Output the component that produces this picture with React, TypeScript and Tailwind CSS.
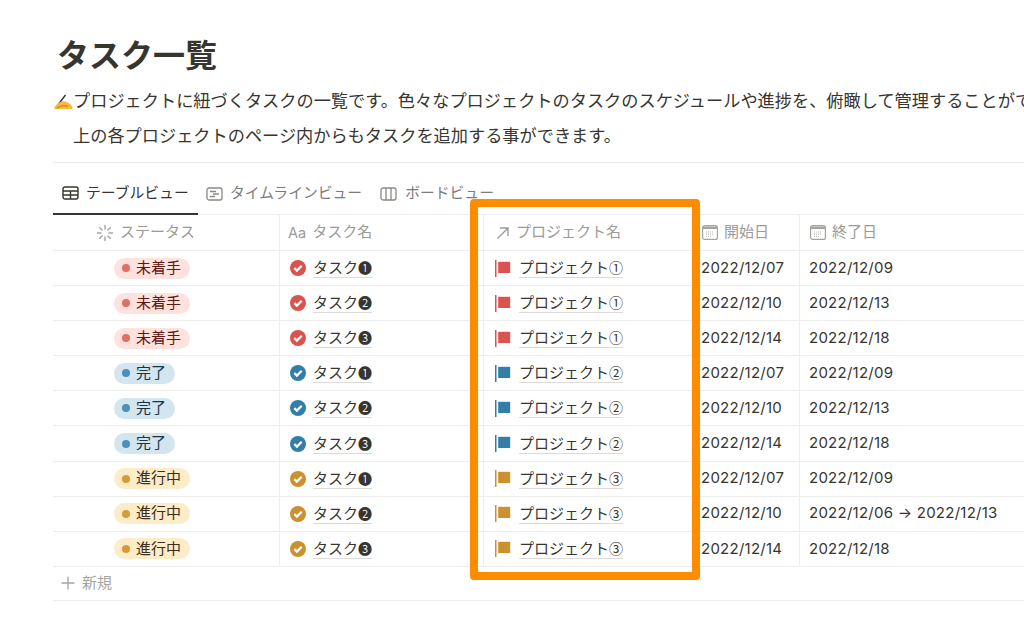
const font = '[font-family:Inter,"Noto_Sans_CJK_JP",sans-serif]';

const rows = [
  { status: "未着手", pill: "bg-[#ffe2dd]", dot: "bg-[#e16f64]", ink: "text-[#5d1715]", color: "#d9534f", task: "❶", project: "①", start: "2022/12/07", end: "2022/12/09" },
  { status: "未着手", pill: "bg-[#ffe2dd]", dot: "bg-[#e16f64]", ink: "text-[#5d1715]", color: "#d9534f", task: "❷", project: "①", start: "2022/12/10", end: "2022/12/13" },
  { status: "未着手", pill: "bg-[#ffe2dd]", dot: "bg-[#e16f64]", ink: "text-[#5d1715]", color: "#d9534f", task: "❸", project: "①", start: "2022/12/14", end: "2022/12/18" },
  { status: "完了", pill: "bg-[#d3e5ef]", dot: "bg-[#4b8fbd]", ink: "text-[#183347]", color: "#337ea9", task: "❶", project: "②", start: "2022/12/07", end: "2022/12/09" },
  { status: "完了", pill: "bg-[#d3e5ef]", dot: "bg-[#4b8fbd]", ink: "text-[#183347]", color: "#337ea9", task: "❷", project: "②", start: "2022/12/10", end: "2022/12/13" },
  { status: "完了", pill: "bg-[#d3e5ef]", dot: "bg-[#4b8fbd]", ink: "text-[#183347]", color: "#337ea9", task: "❸", project: "②", start: "2022/12/14", end: "2022/12/18" },
  { status: "進行中", pill: "bg-[#fdecc8]", dot: "bg-[#d69b36]", ink: "text-[#402c1b]", color: "#cb912f", task: "❶", project: "③", start: "2022/12/07", end: "2022/12/09" },
  { status: "進行中", pill: "bg-[#fdecc8]", dot: "bg-[#d69b36]", ink: "text-[#402c1b]", color: "#cb912f", task: "❷", project: "③", start: "2022/12/10", end: "2022/12/06 → 2022/12/13" },
  { status: "進行中", pill: "bg-[#fdecc8]", dot: "bg-[#d69b36]", ink: "text-[#402c1b]", color: "#cb912f", task: "❸", project: "③", start: "2022/12/14", end: "2022/12/18" },
];

function WritingHand() {
  return (
    <svg width="20" height="20" viewBox="0 0 20 20" className="shrink-0">
      <path d="M2.5 17 L12.5 4" stroke="#333" strokeWidth="1.4" fill="none" />
      <path d="M1 18 C2 14 5 11.5 9 10.5 C11 10 14 11 16 12.5 C18 13.5 19.5 15 19.5 18 Z" fill="#f6b83f" />
      <path d="M4 17 C7 14.5 11 14 15 15.5" stroke="#d9822b" strokeWidth="1.4" fill="none" />
    </svg>
  );
}

function TableIcon() {
  return (
    <svg width="17" height="14" viewBox="0 0 17 14" fill="none" stroke="#37352f" strokeWidth="1.4" className="shrink-0">
      <rect x="1" y="1" width="15" height="12" rx="2" />
      <path d="M1 5h15M1 9h15M8.5 5v8" />
    </svg>
  );
}

function TimelineIcon() {
  return (
    <svg width="17" height="14" viewBox="0 0 17 14" fill="none" stroke="#8a8984" strokeWidth="1.3" className="shrink-0">
      <rect x="1" y="1" width="15" height="12" rx="2" />
      <path d="M4 4.5h6M7 7h6M4 9.5h5" />
    </svg>
  );
}

function BoardIcon() {
  return (
    <svg width="17" height="14" viewBox="0 0 17 14" fill="none" stroke="#8a8984" strokeWidth="1.3" className="shrink-0">
      <rect x="1" y="1" width="15" height="12" rx="2" />
      <path d="M6 1v12M11 1v12" />
    </svg>
  );
}

function SpinnerIcon() {
  return (
    <svg width="18" height="18" viewBox="0 0 18 18" stroke="#a5a4a0" strokeWidth="1.4" strokeLinecap="round" className="shrink-0">
      <path d="M9 1.5v3.5M9 13v3.5M1.5 9H5M13 9h3.5M3.7 3.7l2.4 2.4M11.9 11.9l2.4 2.4M14.3 3.7l-2.4 2.4M6.1 11.9l-2.4 2.4" />
    </svg>
  );
}

function ArrowIcon() {
  return (
    <svg width="14" height="14" viewBox="0 0 14 14" fill="none" stroke="#9b9a97" strokeWidth="1.4" className="shrink-0">
      <path d="M1.5 12.5L12 2M4 2h8v8" />
    </svg>
  );
}

function CalendarIcon() {
  return (
    <svg width="16" height="15" viewBox="0 0 16 15" className="shrink-0">
      <rect x="0.6" y="0.6" width="14.8" height="13.8" rx="2" fill="#fff" stroke="#a5a4a0" strokeWidth="1.2" />
      <path d="M1 1.5h14V4H1z" fill="#a5a4a0" />
      <path d="M4 7h8M4 9.2h8M4 11.4h6" stroke="#b5b4b0" strokeWidth="1" strokeDasharray="1 1" />
    </svg>
  );
}

function CheckIcon({ color }: { color: string }) {
  return (
    <svg width="16" height="16" viewBox="0 0 16 16" className="shrink-0">
      <circle cx="8" cy="8" r="8" fill={color} />
      <path d="M4.3 8.1l2.6 2.5 4.8-4.9" fill="none" stroke="#fff" strokeWidth="2.2" />
    </svg>
  );
}

function FlagIcon({ color }: { color: string }) {
  return (
    <svg width="16" height="17" viewBox="0 0 16 17" className="shrink-0">
      <rect x="0" y="0" width="1.5" height="17" fill={color} />
      <rect x="3.2" y="1.8" width="12" height="11.2" fill={color} />
    </svg>
  );
}

function Circled({ children }: { children: string }) {
  return <span className='[font-family:"Noto_Sans_CJK_JP",sans-serif] text-[14px]'>{children}</span>;
}

function DateCell({ value, className }: { value: string; className: string }) {
  return <div className={`${className} flex items-center text-[15px] tracking-[0.25px] text-[#37352f]`}>{value}</div>;
}

export default function App() {
  return (
    <div className={`${font} relative h-[641px] w-[1024px] overflow-hidden bg-white pl-[53px] text-[#37352f]`}>
      <h1 className="pl-[4px] pt-[34px] text-[32px] font-bold leading-[44px]">タスク一覧</h1>

      <div className="mt-[5px] flex h-[36px] items-center whitespace-nowrap text-[17.2px]">
        <WritingHand />
        <span>プロジェクトに紐づくタスクの一覧です。色々なプロジェクトのタスクのスケジュールや進捗を、俯瞰して管理することができます。</span>
      </div>
      <div className="flex h-[34px] items-center whitespace-nowrap pl-[20px] text-[17.2px]">
        上の各プロジェクトのページ内からもタスクを追加する事ができます。
      </div>

      <div className="mt-[9px] h-px bg-[#ebebea]" />

      <div className="mt-[16px] flex h-[36px] border-b border-[#ededec] text-[14.8px]">
        <div className="flex h-[36px] w-[145px] items-center gap-[7px] border-b-2 border-[#37352f] pb-[6px] pl-[9px]">
          <TableIcon />
          テーブルビュー
        </div>
        <div className="flex items-center gap-[7px] pb-[6px] pl-[8px] text-[#7d7c78]">
          <TimelineIcon />
          タイムラインビュー
        </div>
        <div className="flex items-center gap-[8px] pb-[6px] pl-[18px] text-[#7d7c78]">
          <BoardIcon />
          ボードビュー
        </div>
      </div>

      <div className="flex h-[36px] border-b border-[#ededec] text-[15px] text-[#9b9a97]">
        <div className="flex w-[226px] items-center gap-[6px] pl-[43px]">
          <SpinnerIcon />
          ステータス
        </div>
        <div className="flex w-[204px] items-center gap-[6px] border-l border-[#ededec] pl-[8px]">
          <span className="text-[14.5px]">Aa</span>
          タスク名
        </div>
        <div className="flex w-[209px] items-center gap-[6px] border-l border-[#ededec] pl-[12px]">
          <ArrowIcon />
          プロジェクト名
        </div>
        <div className="flex w-[107px] items-center gap-[6px] border-l border-[#ededec] pl-[9px]">
          <CalendarIcon />
          開始日
        </div>
        <div className="flex flex-1 items-center gap-[6px] border-l border-[#ededec] pl-[10px]">
          <CalendarIcon />
          終了日
        </div>
      </div>

      {rows.map((row, i) => (
        <div key={i} className="flex h-[35.1px] border-b border-[#ededec]">
          <div className="flex w-[226px] items-center pl-[61px]">
            <span className={`flex h-[21px] items-center gap-[6px] rounded-full pl-[8px] pr-[9px] text-[15px] ${row.pill} ${row.ink}`}>
              <span className={`h-[8px] w-[8px] rounded-full ${row.dot}`} />
              {row.status}
            </span>
          </div>
          <div className="flex w-[204px] items-center gap-[7px] border-l border-[#ededec] pl-[10px]">
            <CheckIcon color={row.color} />
            <span className="border-b border-[#dcdbd9] text-[15px] leading-[18px]">
              タスク<Circled>{row.task}</Circled>
            </span>
          </div>
          <div className="flex w-[209px] items-center gap-[8px] border-l border-[#ededec] pl-[11px]">
            <FlagIcon color={row.color} />
            <span className="border-b border-[#dcdbd9] text-[15px] leading-[18px]">
              プロジェクト<Circled>{row.project}</Circled>
            </span>
          </div>
          <DateCell value={row.start} className="w-[107px] border-l border-[#ededec] pl-[8px]" />
          <DateCell value={row.end} className="flex-1 border-l border-[#ededec] pl-[9px]" />
        </div>
      ))}

      <div className="flex h-[34px] items-center gap-[7px] border-b border-[#ededec] pl-[8px] text-[15px] text-[#a5a4a0]">
        <svg width="14" height="14" viewBox="0 0 14 14" stroke="#a5a4a0" strokeWidth="1.3" className="shrink-0">
          <path d="M7 0.5v13M0.5 7h13" />
        </svg>
        新規
      </div>

      {/* annotation drawn over the screenshot */}
      <div className="absolute left-[470px] top-[199px] h-[381px] w-[230px] rounded-[4px] border-[8px] border-[#ff8c00]" />
    </div>
  );
}
